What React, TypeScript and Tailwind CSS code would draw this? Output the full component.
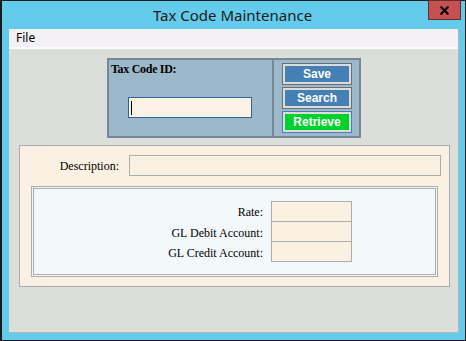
import { X } from "lucide-react"

const serif = "font-['Liberation_Serif','Times_New_Roman',serif]"

const Btn = ({ label, green }: { label: string; green?: boolean }) => (
  <div
    className={`w-[70px] h-[22px] border p-[2px] bg-[#dcdcdc] ${green ? "border-[#4a7fb5]" : "border-[#6e6e6e]"}`}
  >
    <div
      className={`h-full flex items-center justify-center text-white font-bold text-[12px] font-['Liberation_Sans',Arial,sans-serif] ${green ? "bg-[#00d22b]" : "bg-[#4580b4]"}`}
    >
      {label}
    </div>
  </div>
)

export default function App() {
  return (
    <div className="w-[466px] h-[341px] bg-[#63cbeb] border border-l-2 border-[#1a1a1a] flex flex-col">
      <div className="h-[28px] relative flex items-center justify-center shrink-0">
        <span className="text-[15px] text-[#1b1b1b] font-['Noto_Sans','Open_Sans',sans-serif] pr-[2px]">
          Tax Code Maintenance
        </span>
        <div className="absolute right-[4px] -top-px w-[33px] h-[20px] bg-[#c75050] border border-[#5a3030] flex items-center justify-center">
          <X size={13} strokeWidth={4} className="text-black" />
        </div>
      </div>

      <div className="ml-[7px] mr-[6px] h-[304px] flex flex-col bg-[#dcdeda] border-r border-b border-[#b4b8b4]">
        <div className="h-[20px] bg-[#f3f1f5] border-b-2 border-[#fbfbfb] flex items-center pl-[7px] text-[12px] text-black font-['Noto_Sans','Open_Sans',sans-serif] shrink-0">
          File
        </div>

        <div className="ml-[98px] mt-[9px] w-[254px] h-[80px] border-2 border-[#778795] bg-[#9cb8cb] flex">
          <div className="w-[163px] flex flex-col pl-[2px] pt-[2px]">
            <span className={`${serif} font-bold text-[12px] text-black leading-[14px] tracking-[-0.3px]`}>Tax Code ID:</span>
            <div className="mt-[21px] ml-[17px] w-[124px] h-[21px] bg-[#fcf2e5] border border-[#2f6596] flex items-center pl-[2px]">
              <div className="w-px h-[14px] bg-black" />
            </div>
          </div>
          <div className="w-[2px] bg-[#778795]" />
          <div className="flex flex-col gap-[2px] pl-[8px] pt-[3px]">
            <Btn label="Save" />
            <Btn label="Search" />
            <Btn label="Retrieve" green />
          </div>
        </div>

        <div className="ml-[10px] mt-[7px] w-[431px] h-[142px] bg-[#fbf1e3] border border-[#acacac] flex flex-col">
          <div className="flex items-center mt-[9px] h-[21px]">
            <span className={`${serif} w-[99px] text-right text-[12px] text-black`}>Description:</span>
            <div className="ml-[10px] w-[312px] h-[21px] border border-[#acacac] bg-[#fbf1e3]" />
          </div>
          <div className="ml-[11px] mt-[10px] w-[407px] h-[91px] border-[3px] border-double border-[#acacac] bg-[#f3f8fb] pt-[12px] pl-[89px]">
            <div className="grid grid-cols-[140px_81px] gap-x-[8px]">
              {["Rate:", "GL Debit Account:", "GL Credit Account:"].map((l, i) => (
                <div key={l} className="contents">
                  <span className={`${serif} text-right text-[12px] text-black h-[20px] leading-[22px]`}>{l}</span>
                  <div className={`h-[21px] border border-[#acacac] bg-[#fbf1e3] ${i > 0 ? "-mt-px" : ""}`} />
                </div>
              ))}
            </div>
          </div>
        </div>
      </div>
    </div>
  )
}
